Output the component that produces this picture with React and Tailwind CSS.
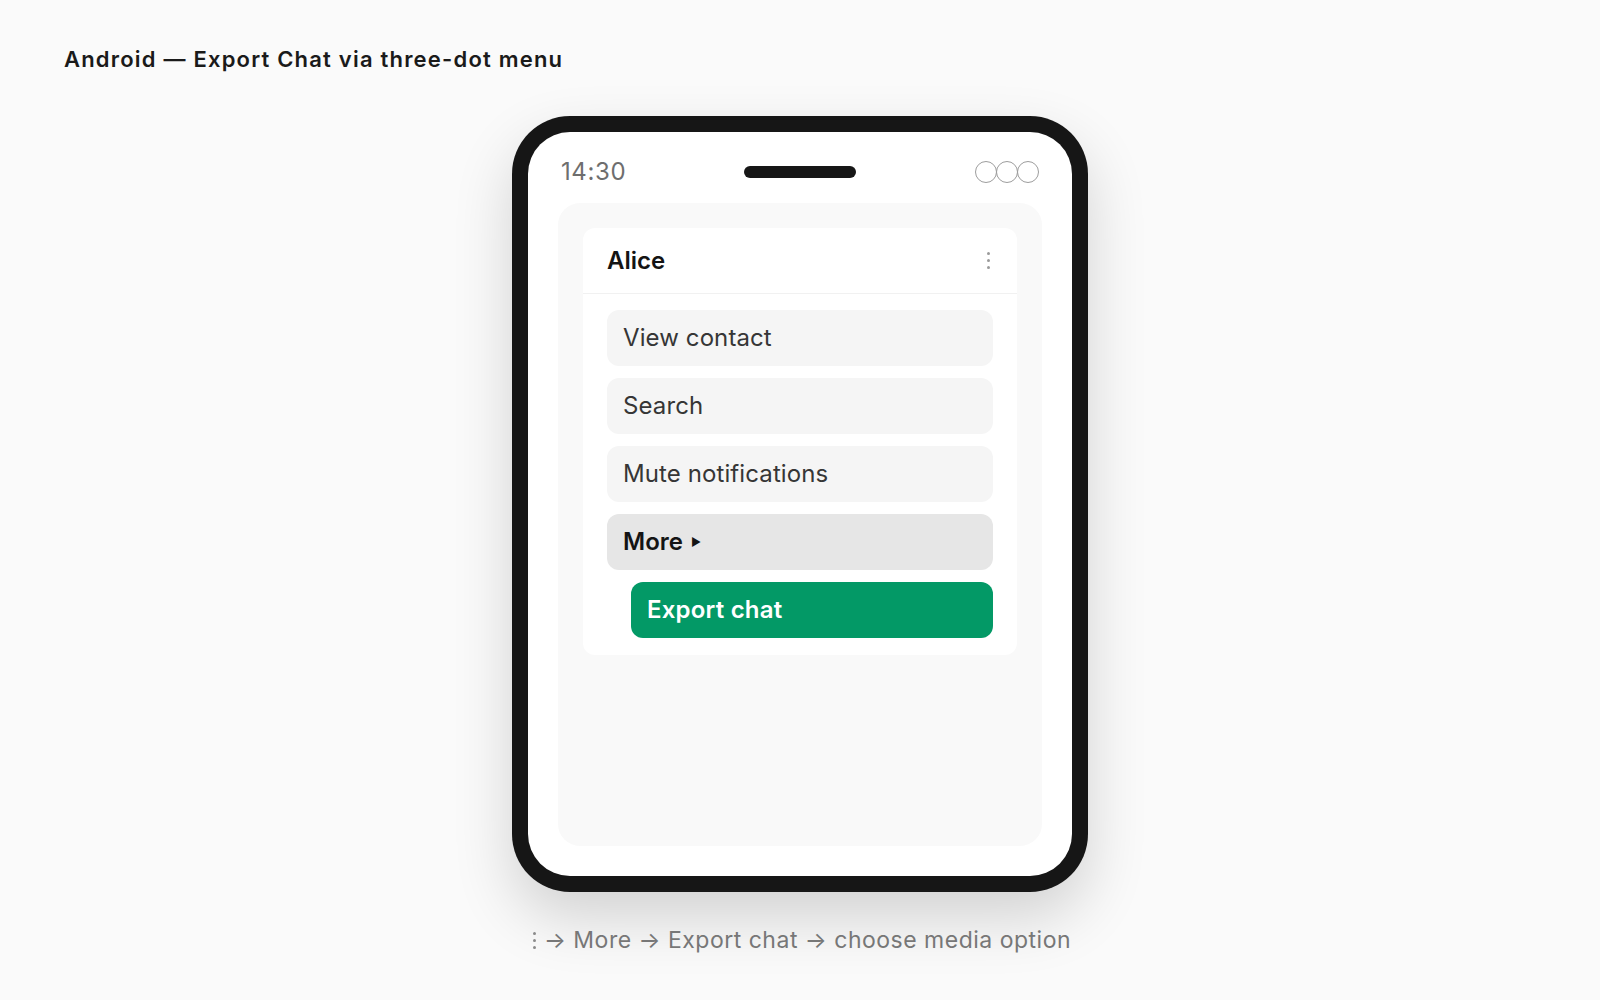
import React from "react";

const font = { fontFamily: "Inter, 'Noto Sans', 'Liberation Sans', sans-serif" };

function Kebab({ className = "", dot = "bg-[#9a9a9a]" }) {
  return (
    <div className={`flex flex-col items-center gap-[4px] ${className}`}>
      <span className={`block h-[3px] w-[3px] rounded-full ${dot}`} />
      <span className={`block h-[3px] w-[3px] rounded-full ${dot}`} />
      <span className={`block h-[3px] w-[3px] rounded-full ${dot}`} />
    </div>
  );
}

function MenuItem({ children }) {
  return (
    <div className="flex h-[56px] items-center rounded-[12px] bg-[#f5f5f5] pl-[16px] text-[24px] tracking-[0.1px] text-[#363636]">
      {children}
    </div>
  );
}

export default function App() {
  return (
    <div style={font} className="flex h-[1000px] w-full flex-col bg-[#fafafa] px-[64px] pt-[45px]">
      <h1 className="h-[28px] text-[22px] font-semibold leading-[28px] tracking-[1.2px] text-[#1a1a1a]">
        Android — Export Chat via three-dot menu
      </h1>

      <div className="mt-[43px] flex justify-center">
        {/* device frame */}
        <div className="h-[776px] w-[576px] rounded-[58px] bg-[#161616] p-[16px] shadow-[0_26px_60px_rgba(0,0,0,0.16)]">
          <div className="flex h-full w-full flex-col rounded-[42px] bg-white px-[30px] pb-[30px]">
            {/* status bar */}
            <div className="flex items-center justify-between px-[3px] pb-[18px] pt-[27px]">
              <span className="w-[112px] text-[24px] leading-[26px] tracking-[0.6px] text-[#6e6e6e]">14:30</span>
              <span className="block h-[12px] w-[112px] rounded-full bg-[#161616]" />
              <div className="flex w-[112px] justify-end">
                <span className="block h-[22px] w-[22px] rounded-full border border-[#9d9d9d]" />
                <span className="-ml-[1px] block h-[22px] w-[22px] rounded-full border border-[#9d9d9d]" />
                <span className="-ml-[1px] block h-[22px] w-[22px] rounded-full border border-[#9d9d9d]" />
              </div>
            </div>

            {/* app content */}
            <div className="flex-1 rounded-[22px] bg-[#f9f9f9] p-[25px]">
              <div className="rounded-[12px] bg-white">
                <div className="flex h-[66px] items-center justify-between border-b border-[#f1f1f1] pl-[24px] pr-[27px]">
                  <span className="text-[24px] font-semibold text-[#141414]">Alice</span>
                  <Kebab />
                </div>
                <div className="flex flex-col gap-[12px] px-[24px] pb-[17px] pt-[16px]">
                  <MenuItem>View contact</MenuItem>
                  <MenuItem>Search</MenuItem>
                  <MenuItem>Mute notifications</MenuItem>
                  <div className="flex h-[56px] items-center rounded-[12px] bg-[#e6e6e6] pl-[16px] text-[24px] font-semibold text-[#141414]">
                    More
                    <span className="ml-[8px] text-[11px] font-normal">▶</span>
                  </div>
                  <div className="ml-[24px] flex h-[56px] items-center rounded-[12px] bg-[#039966] pl-[16px] text-[24px] font-semibold tracking-[0.2px] text-white">
                    Export chat
                  </div>
                </div>
              </div>
            </div>
          </div>
        </div>
      </div>

      <div className="mt-[33px] flex items-center justify-center gap-[8px] pl-[4px] text-[23px] leading-[30px] tracking-[0.5px] text-[#777777]">
        <Kebab dot="bg-[#8a8a8a]" />
        <span>→ More → Export chat → choose media option</span>
      </div>
    </div>
  );
}
